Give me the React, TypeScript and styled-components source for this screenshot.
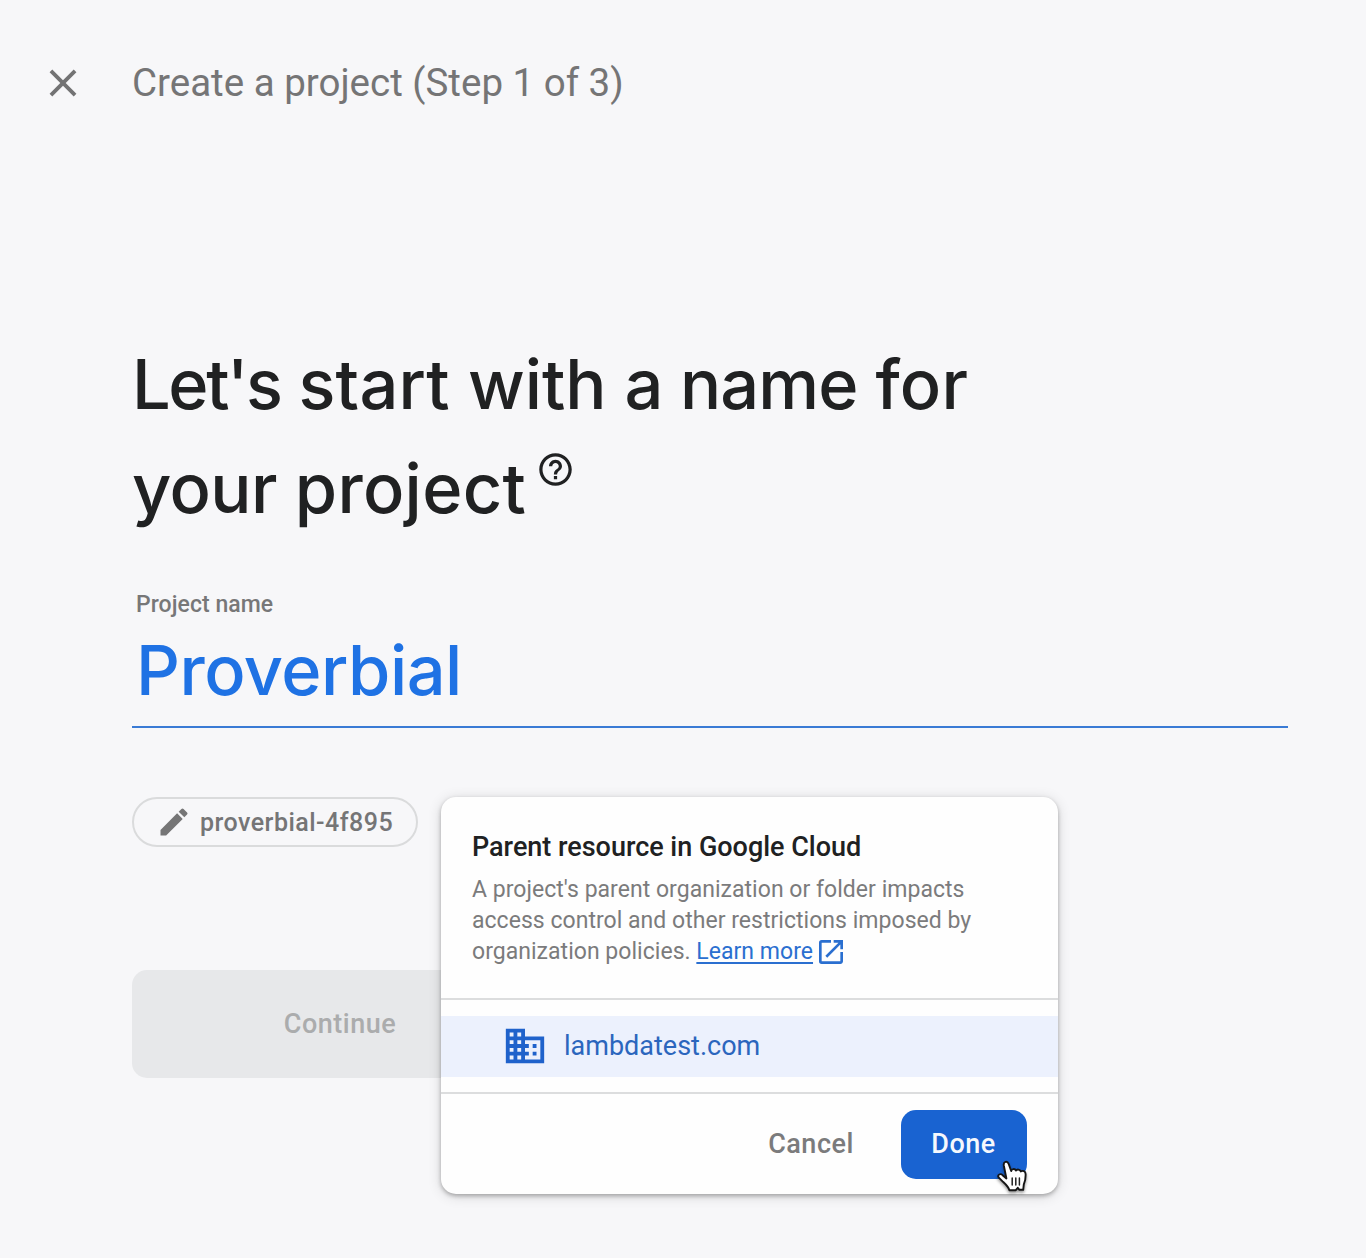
import React from "react";
import styled, { createGlobalStyle } from "styled-components";
import { MdBusiness, MdClose, MdEdit, MdHelpOutline, MdOpenInNew } from "react-icons/md";

const GlobalStyle = createGlobalStyle`
  *, *::before, *::after { box-sizing: border-box; }
  body {
    margin: 0;
    background: #f7f7f9;
    font-family: Roboto, "Liberation Sans", sans-serif;
    color: #202122;
  }
  button { font-family: inherit; border: 0; }
`;

const Page = styled.div`
  min-height: 1258px;
  overflow: hidden;
`;

const Header = styled.header`
  display: flex;
  align-items: center;
  height: 165px;
  padding-left: 40px;
  gap: 46px;
`;

const CloseButton = styled.button`
  display: flex;
  padding: 0;
  background: none;
  color: #737374;
`;

const StepTitle = styled.div`
  font-size: 38.5px;
  line-height: 46px;
  letter-spacing: 0;
  color: #757576;
  white-space: nowrap;
`;

const Content = styled.main`
  padding: 168px 78px 0 132px;
`;

const Heading = styled.h1`
  margin: 0;
  font-family: Inter, Roboto, sans-serif;
  font-size: 68.5px;
  font-weight: 500;
  line-height: 104px;
  white-space: nowrap;
`;

const HeadingLine = styled.span`
  display: flex;
  gap: 18px;
`;

const Word = styled.span<{ $tracking: number }>`
  letter-spacing: ${(p) => p.$tracking}px;
`;

const HelpIcon = styled(MdHelpOutline)`
  margin: 13px 0 0 -8px;
`;

const Field = styled.div`
  margin-top: 49px;
  height: 138px;
  padding-left: 4px;
  border-bottom: 2px solid #3a7bd5;
`;

const FieldLabel = styled.label`
  display: block;
  font-size: 23px;
  font-weight: 500;
  line-height: 30px;
  letter-spacing: 0.05px;
  color: #777778;
`;

const FieldValue = styled.div`
  font-family: Inter, Roboto, sans-serif;
  font-size: 68.5px;
  font-weight: 500;
  line-height: 102px;
  letter-spacing: -0.5px;
  color: #1f72e4;
`;

const Resources = styled.div`
  position: relative;
  margin-top: 69px;
`;

const IdChip = styled.div`
  display: flex;
  align-items: center;
  width: 286px;
  height: 50px;
  padding-left: 22px;
  gap: 8px;
  border: 2px solid #dadbdc;
  border-radius: 25px;
  font-size: 25px;
  font-weight: 500;
  letter-spacing: 0.48px;
  color: #757576;
  white-space: nowrap;
`;

const ContinueButton = styled.button`
  display: block;
  margin-top: 123px;
  width: 416px;
  height: 108px;
  border-radius: 15px;
  background: #e7e8ea;
  color: #abacad;
  font-size: 27px;
  font-weight: 500;
  letter-spacing: 0.5px;
`;

const Popup = styled.section`
  position: absolute;
  left: 309px;
  top: 0;
  width: 617px;
  height: 397px;
  border-radius: 15px;
  background: #fefefe;
  box-shadow: 0 2px 4px rgba(0, 0, 0, 0.28), 0 2px 14px rgba(0, 0, 0, 0.14);
`;

const PopupHead = styled.div`
  height: 203px;
  padding: 33px 31px 0;
  border-bottom: 2px solid #dcddde;
`;

const PopupTitle = styled.h2`
  margin: 0 0 9px;
  font-size: 27px;
  font-weight: 500;
  line-height: 35px;
  letter-spacing: -0.02px;
  white-space: nowrap;
`;

const PopupText = styled.p`
  display: flex;
  align-items: center;
  margin: 0;
  height: 31px;
  font-size: 23px;
  line-height: 31px;
  letter-spacing: 0.03px;
  color: #7b7b7c;
  white-space: pre;
`;

const LearnMore = styled.a`
  display: flex;
  align-items: center;
  gap: 2px;
  color: #2a6fd0;
`;

const LinkText = styled.span`
  text-decoration: underline;
  text-decoration-thickness: 2px;
  text-underline-offset: 3px;
`;

const OrgList = styled.div`
  padding: 16px 0 15px;
  border-bottom: 2px solid #dcddde;
`;

const OrgRow = styled.div`
  display: flex;
  align-items: center;
  height: 61px;
  padding: 0 0 2px 61px;
  gap: 16px;
  background: #ecf1fd;
  color: #2b66bd;
  font-size: 27px;
  letter-spacing: 0;

  svg { color: #1f62cb; }
`;

const Actions = styled.div`
  position: relative;
  display: flex;
  align-items: center;
  justify-content: flex-end;
  height: 101px;
  padding-right: 31px;
  gap: 16px;
`;

const ActionButton = styled.button<{ $primary?: boolean }>`
  height: 69px;
  width: ${(p) => (p.$primary ? 126 : 148)}px;
  padding: 0 ${(p) => (p.$primary ? 1 : 0)}px 2px 0;
  border-radius: 15px;
  background: ${(p) => (p.$primary ? "#1963d1" : "transparent")};
  color: ${(p) => (p.$primary ? "#f5f8fd" : "#7b7b7c")};
  font-size: 27px;
  font-weight: 500;
  letter-spacing: 0.5px;
`;

const Pointer = styled.svg`
  position: absolute;
  left: 556px;
  top: 64px;
  overflow: visible;
  filter: drop-shadow(0 2px 1.5px rgba(0, 0, 0, 0.4));
`;

function HandPointer() {
  return (
    <Pointer width="32" height="34" viewBox="0 0 32 34" fill="none">
      <path
        d="M9.4 20.5 L6.8 7.4 C6.2 3.6 10.2 2.4 11.6 5.8 L14.2 13 C14.6 10.6 18 10.4 19 12.6 C20 11 23 11.2 23.8 13.4 C25.8 12.2 28.6 13.2 28.6 16 C28.8 21 28.4 23 26.8 26.4 L26.2 31.8 L22.4 31.8 L20.8 29.8 L18.8 32.2 L12.4 32.2 C11.4 28.2 7.6 25.4 4.8 22.6 L1.6 19.4 C.2 16.8 3.4 15 5.6 17.2 Z"
        fill="#fff"
        stroke="#151515"
        strokeWidth="1.9"
        strokeLinejoin="round"
      />
      <path d="M15.2 20v7M18.8 20v7M22.4 20v7" stroke="#222" strokeWidth="1.5" strokeLinecap="round" />
    </Pointer>
  );
}

export default function App() {
  return (
    <Page>
      <GlobalStyle />
      <Header>
        <CloseButton aria-label="Close">
          <MdClose size={46} />
        </CloseButton>
        <StepTitle>Create a project (Step 1 of 3)</StepTitle>
      </Header>
      <Content>
        <Heading>
          <HeadingLine>
            <Word $tracking={-2.4}>Let's</Word>
            <Word $tracking={0.2}>start</Word>
            <Word $tracking={0}>with</Word>
            <Word $tracking={-1.5}>a</Word>
            <Word $tracking={-0.9}>name</Word>
            <Word $tracking={0.2}>for</Word>
          </HeadingLine>
          <HeadingLine>
            <Word $tracking={-0.6}>your</Word>
            <Word $tracking={0.3}>project</Word>
            <HelpIcon size={39} />
          </HeadingLine>
        </Heading>
        <Field>
          <FieldLabel>Project name</FieldLabel>
          <FieldValue>Proverbial</FieldValue>
        </Field>
        <Resources>
          <IdChip>
            <MdEdit size={36} />
            proverbial-4f895
          </IdChip>
          <ContinueButton>Continue</ContinueButton>
          <Popup>
            <PopupHead>
              <PopupTitle>Parent resource in Google Cloud</PopupTitle>
              <PopupText>A project's parent organization or folder impacts</PopupText>
              <PopupText>access control and other restrictions imposed by</PopupText>
              <PopupText>
                {"organization policies. "}
                <LearnMore>
                  <LinkText>Learn more</LinkText>
                  <MdOpenInNew size={32} />
                </LearnMore>
              </PopupText>
            </PopupHead>
            <OrgList>
              <OrgRow>
                <MdBusiness size={46} />
                lambdatest.com
              </OrgRow>
            </OrgList>
            <Actions>
              <ActionButton>Cancel</ActionButton>
              <ActionButton $primary>Done</ActionButton>
              <HandPointer />
            </Actions>
          </Popup>
        </Resources>
      </Content>
    </Page>
  );
}
